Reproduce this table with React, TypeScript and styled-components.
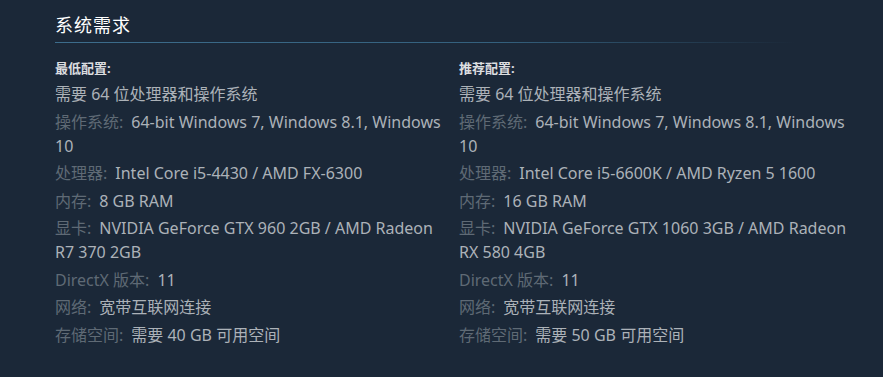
import React from 'react';
import styled, { createGlobalStyle } from 'styled-components';

const GlobalStyle = createGlobalStyle`
  html, body {
    margin: 0;
    padding: 0;
    background: #1b2838;
  }
  body {
    font-family: 'Noto Sans', 'Noto Sans CJK SC', sans-serif;
  }
`;

const Section = styled.section`
  width: 808px;
  padding: 13px 0 0 55px;
`;

const Heading = styled.h2`
  margin: 0 0 16px 0;
  padding: 0 0 6px 0;
  font-size: 18px;
  line-height: 24px;
  font-weight: normal;
  letter-spacing: 1px;
  color: #ffffff;
  background-image: linear-gradient(
    to right,
    #3d6d8c 0%,
    #34607d 60%,
    rgba(52, 96, 125, 0) 100%
  );
  background-repeat: no-repeat;
  background-position: left bottom;
  background-size: 740px 1px;
`;

const Columns = styled.div`
  display: flex;
`;

const Column = styled.div<{ $first?: boolean }>`
  width: 396px;
  padding-right: ${(p) => (p.$first ? '8px' : '0')};
`;

const ColumnTitle = styled.div`
  font-size: 13px;
  line-height: 18px;
  font-weight: bold;
  color: #dcdee0;
  margin-bottom: 5px;
`;

const List = styled.ul`
  list-style: none;
  margin: 0;
  padding: 0;
`;

const Item = styled.li`
  font-size: 16px;
  line-height: 24px;
  color: #acb2b8;
  margin-bottom: 3.5px;
`;

const Label = styled.span`
  color: #5f6a75;
  margin-right: 8px;
`;

const Value = styled.span`
  color: #acb2b8;
`;

type Req = { label?: string; value: string };

const minimum: Req[] = [
  { value: '需要 64 位处理器和操作系统' },
  { label: '操作系统:', value: '64-bit Windows 7, Windows 8.1, Windows 10' },
  { label: '处理器:', value: 'Intel Core i5-4430 / AMD FX-6300' },
  { label: '内存:', value: '8 GB RAM' },
  { label: '显卡:', value: 'NVIDIA GeForce GTX 960 2GB / AMD Radeon R7 370 2GB' },
  { label: 'DirectX 版本:', value: '11' },
  { label: '网络:', value: '宽带互联网连接' },
  { label: '存储空间:', value: '需要 40 GB 可用空间' },
];

const recommended: Req[] = [
  { value: '需要 64 位处理器和操作系统' },
  { label: '操作系统:', value: '64-bit Windows 7, Windows 8.1, Windows 10' },
  { label: '处理器:', value: 'Intel Core i5-6600K / AMD Ryzen 5 1600' },
  { label: '内存:', value: '16 GB RAM' },
  { label: '显卡:', value: 'NVIDIA GeForce GTX 1060 3GB / AMD Radeon RX 580 4GB' },
  { label: 'DirectX 版本:', value: '11' },
  { label: '网络:', value: '宽带互联网连接' },
  { label: '存储空间:', value: '需要 50 GB 可用空间' },
];

const ReqColumn = ({ title, items, first }: { title: string; items: Req[]; first?: boolean }) => (
  <Column $first={first}>
    <ColumnTitle>{title}</ColumnTitle>
    <List>
      {items.map((item, idx) => (
        <Item key={idx}>
          {item.label && <Label>{item.label}</Label>}
          <Value>{item.value}</Value>
        </Item>
      ))}
    </List>
  </Column>
);

const App = () => (
  <>
    <GlobalStyle />
    <Section>
      <Heading>系统需求</Heading>
      <Columns>
        <ReqColumn title="最低配置:" items={minimum} first />
        <ReqColumn title="推荐配置:" items={recommended} />
      </Columns>
    </Section>
  </>
);

export default App;
